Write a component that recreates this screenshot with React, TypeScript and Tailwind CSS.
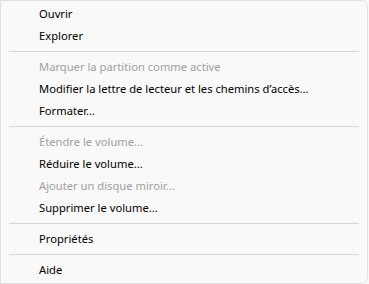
import React from 'react';

type Entry = { label: string; disabled?: boolean } | 'sep';

const entries: Entry[] = [
  { label: 'Ouvrir' },
  { label: 'Explorer' },
  'sep',
  { label: 'Marquer la partition comme active', disabled: true },
  { label: 'Modifier la lettre de lecteur et les chemins d’accès...' },
  { label: 'Formater...' },
  'sep',
  { label: 'Étendre le volume...', disabled: true },
  { label: 'Réduire le volume...' },
  { label: 'Ajouter un disque miroir...', disabled: true },
  { label: 'Supprimer le volume...' },
  'sep',
  { label: 'Propriétés' },
  'sep',
  { label: 'Aide' },
];

const App: React.FC = () => {
  return (
    <div className="w-[369px] h-[284px] bg-[#f9f9f9] overflow-hidden">
      <div
        className="w-[368px] h-[284px] bg-[#f9f9f9] border-l border-t border-r border-b border-[#e0e0e0] rounded-tr-[7px] rounded-br-[7px] py-[2px] text-[11.2px] leading-none"
        style={{ fontFamily: '"Segoe UI", "Noto Sans", "Open Sans", sans-serif' }}
      >
        {entries.map((e, i) =>
          e === 'sep' ? (
            <div key={i} className="h-[9px] flex items-center px-[8px]">
              <div className="h-px w-full bg-[#d5d5d5]" />
            </div>
          ) : (
            <div
              key={i}
              className={`h-[22px] flex items-center pl-[38px] ${e.disabled ? 'text-[#a0a0a0]' : 'text-[#000000]'}`}
            >
              {e.label}
            </div>
          )
        )}
      </div>
    </div>
  );
};

export default App;
